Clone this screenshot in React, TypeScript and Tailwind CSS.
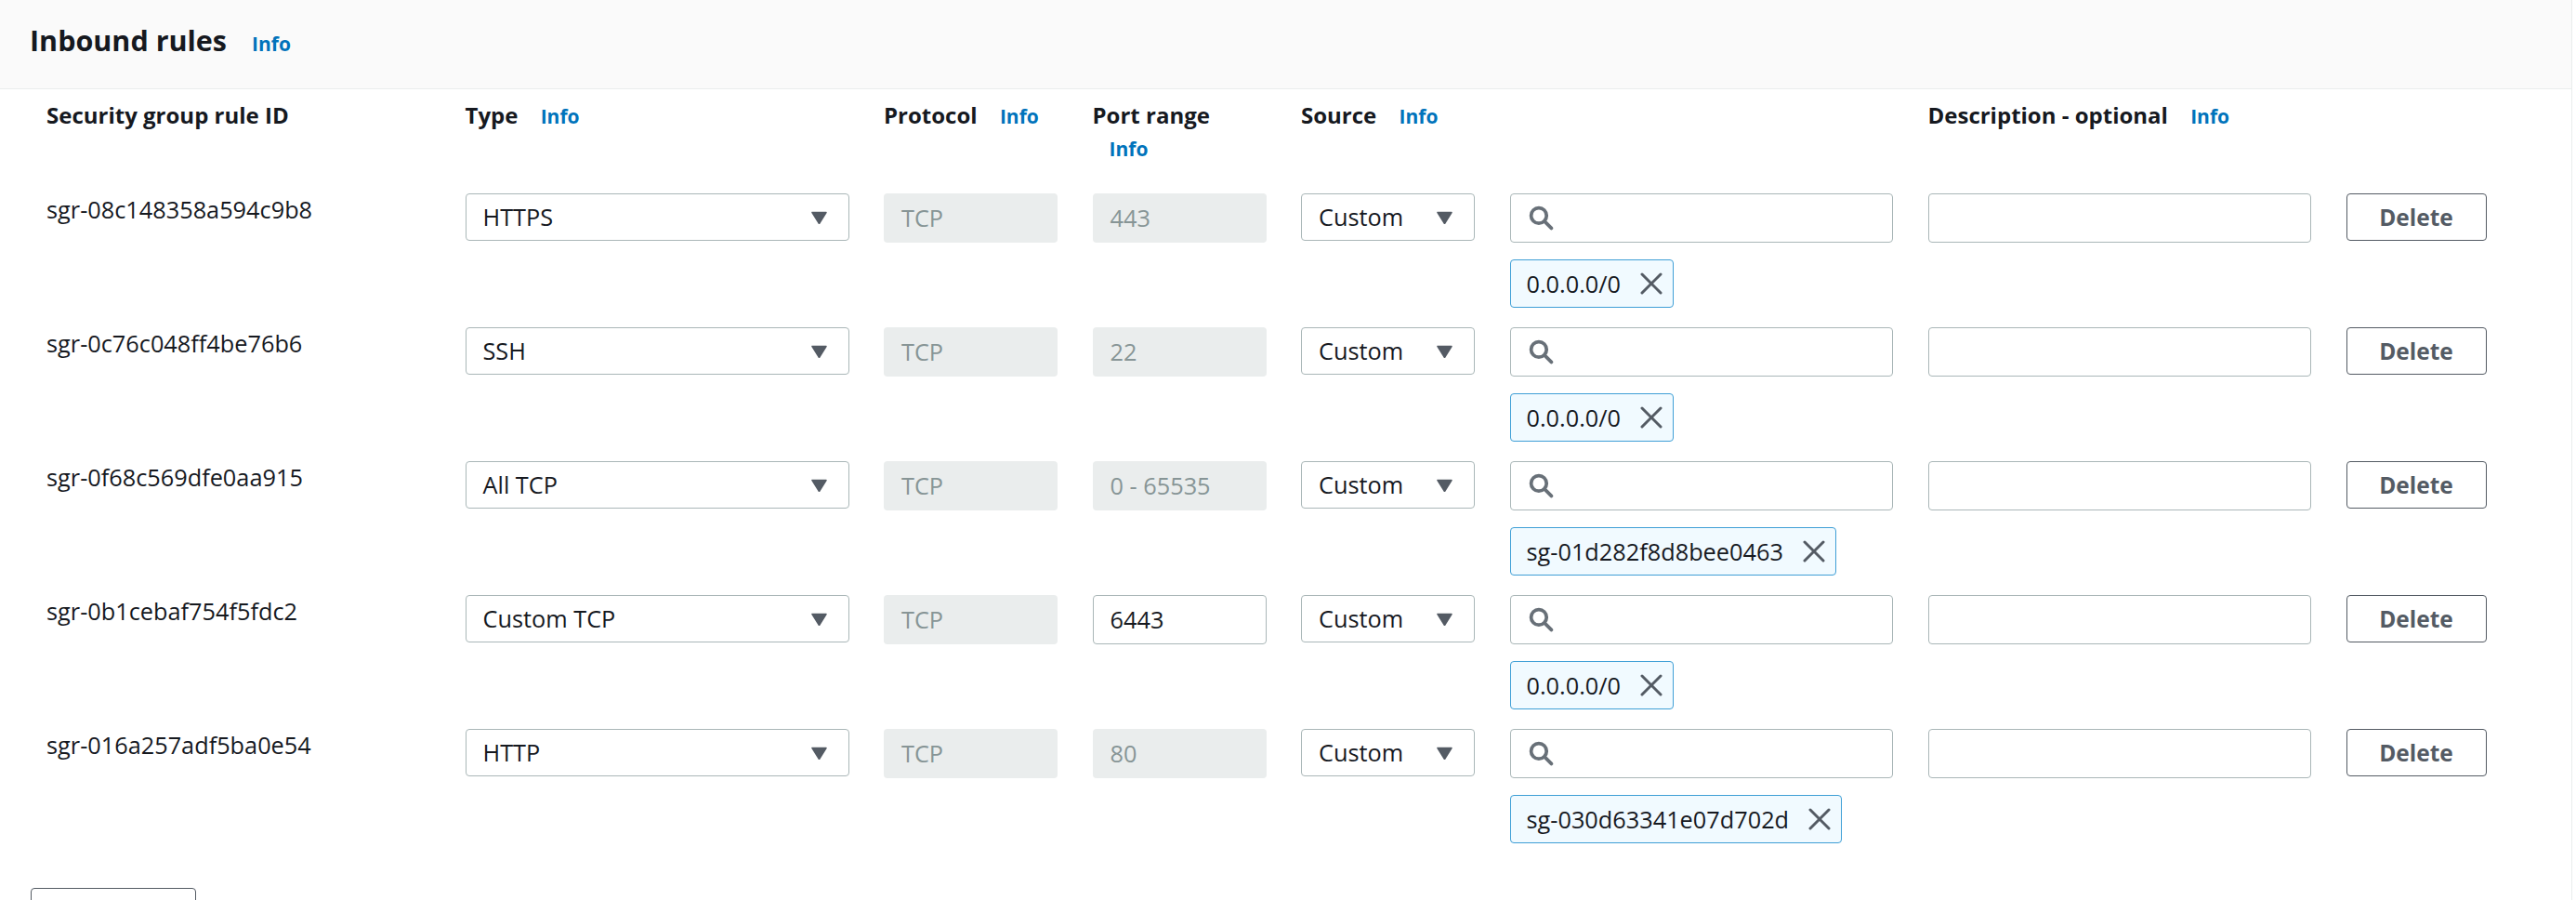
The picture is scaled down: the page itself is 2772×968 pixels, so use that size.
import React from "react";

type Rule = {
  id: string;
  type: string;
  port: string;
  portEditable?: boolean;
  token: string;
};

const rules: Rule[] = [
  { id: "sgr-08c148358a594c9b8", type: "HTTPS", port: "443", token: "0.0.0.0/0" },
  { id: "sgr-0c76c048ff4be76b6", type: "SSH", port: "22", token: "0.0.0.0/0" },
  { id: "sgr-0f68c569dfe0aa915", type: "All TCP", port: "0 - 65535", token: "sg-01d282f8d8bee0463" },
  { id: "sgr-0b1cebaf754f5fdc2", type: "Custom TCP", port: "6443", portEditable: true, token: "0.0.0.0/0" },
  { id: "sgr-016a257adf5ba0e54", type: "HTTP", port: "80", token: "sg-030d63341e07d702d" },
];

const gridCols =
  "grid grid-cols-[413px_413px_187px_187px_187px_412.5px_412.5px_151px] gap-x-[37.5px]";

function Caret() {
  return (
    <svg width="17" height="14" viewBox="0 0 17 14" className="shrink-0">
      <path d="M1 1.5 H16 L8.5 13.5 Z" fill="#545b64" stroke="#545b64" strokeWidth="1.5" strokeLinejoin="round" />
    </svg>
  );
}

function SearchIcon() {
  return (
    <svg width="27" height="27" viewBox="0 0 26 26" className="shrink-0">
      <circle cx="10.5" cy="10.5" r="8" fill="none" stroke="#687078" strokeWidth="3.6" />
      <line x1="16.5" y1="16.5" x2="23.5" y2="23.5" stroke="#687078" strokeWidth="3.6" strokeLinecap="round" />
    </svg>
  );
}

function XIcon() {
  return (
    <svg width="24" height="24" viewBox="0 0 24 24" className="shrink-0">
      <line x1="2" y1="2" x2="22" y2="22" stroke="#545b64" strokeWidth="3" strokeLinecap="round" />
      <line x1="22" y1="2" x2="2" y2="22" stroke="#545b64" strokeWidth="3" strokeLinecap="round" />
    </svg>
  );
}

function Info() {
  return (
    <span className="ml-[18px] inline-block text-[21px] font-bold leading-[35px] text-[#0073bb]">Info</span>
  );
}

function Label({ text, info }: { text: string; info?: boolean }) {
  return (
    <div className="text-[24px] font-bold leading-[35px] text-[#16191f]">
      {text}
      {info ? " " : null}
      {info ? <Info /> : null}
    </div>
  );
}

function Select({ value }: { value: string }) {
  return (
    <div className="flex h-[51px] w-full items-center justify-between rounded-[4px] border border-[#aab7b8] bg-white pl-[18px] pr-[23px]">
      <span className="text-[25.3px] leading-[35px] text-[#16191f]">{value}</span>
      <Caret />
    </div>
  );
}

function Disabled({ value }: { value: string }) {
  return (
    <div className="flex h-[53px] w-full items-center rounded-[4px] bg-[#eaeded] pl-[19px]">
      <span className="text-[25.3px] leading-[35px] text-[#879596]">{value}</span>
    </div>
  );
}

function Field({ value }: { value: string }) {
  return (
    <div className="flex h-[53px] w-full items-center rounded-[4px] border border-[#aab7b8] bg-white pl-[18px]">
      <span className="text-[25.3px] leading-[35px] text-[#16191f]">{value}</span>
    </div>
  );
}

function Row({ rule }: { rule: Rule }) {
  return (
    <div className={`${gridCols} items-start`}>
      <div className="text-[25.3px] leading-[35px] text-[#16191f]">{rule.id}</div>
      <Select value={rule.type} />
      <Disabled value="TCP" />
      {rule.portEditable ? <Field value={rule.port} /> : <Disabled value={rule.port} />}
      <Select value="Custom" />
      <div className="flex flex-col items-start gap-[18px]">
        <div className="flex h-[53px] w-full items-center rounded-[4px] border border-[#aab7b8] bg-white pl-[19px]">
          <SearchIcon />
        </div>
        <div className="flex h-[52px] items-center gap-[21px] rounded-[4px] border border-[#3f9fd6] bg-[#f1faff] pl-[17px] pr-[11px]">
          <span className="text-[25.3px] leading-[35px] text-[#16191f]">{rule.token}</span>
          <XIcon />
        </div>
      </div>
      <div className="h-[53px] w-full rounded-[4px] border border-[#aab7b8] bg-white" />
      <button className="flex h-[51px] w-[151px] items-center justify-center rounded-[4px] border border-[#545b64] bg-white text-[24.5px] font-bold leading-[35px] text-[#545b64]">
        Delete
      </button>
    </div>
  );
}

export default function App() {
  return (
    <div
      className="h-[968px] w-[2768px] overflow-hidden border-r border-[#eaeded] bg-white"
      style={{ fontFamily: '"Open Sans", "Noto Sans", Arial, sans-serif' }}
    >
      <div className="flex h-[96px] items-baseline border-b border-[#eaeded] bg-[#fafafa] pl-[32px] pt-[23px]">
        <h2 className="text-[30.5px] font-bold leading-[40px] text-[#16191f]">Inbound rules</h2>
        <span className="ml-[27px] text-[21px] font-bold text-[#0073bb]">Info</span>
      </div>
      <div className="pl-[50px] pt-[10px]">
        <div className={`${gridCols} mb-[32px] h-[70px] items-start`}>
          <Label text="Security group rule ID" />
          <Label text="Type" info />
          <Label text="Protocol" info />
          <Label text="Port range" info />
          <Label text="Source" info />
          <div />
          <Label text="Description - optional" info />
          <div />
        </div>
        <div className="flex flex-col gap-[21px]">
          {rules.map((r) => (
            <Row key={r.id} rule={r} />
          ))}
        </div>
      </div>
      <div className="pl-[33px] pt-[48px]">
        <button aria-label="Add rule" className="h-[51px] w-[178px] rounded-[4px] border border-[#545b64] bg-white" />
      </div>
    </div>
  );
}
